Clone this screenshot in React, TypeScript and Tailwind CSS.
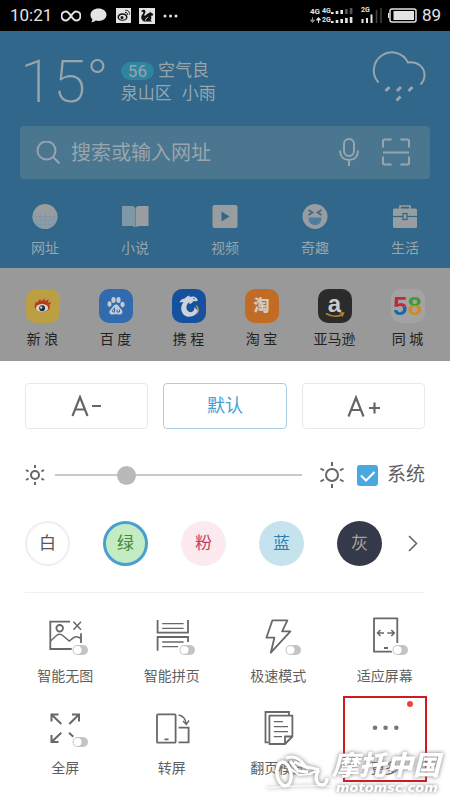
import { ReactNode, useState } from "react";

const navItems = [
  { label: "网址", icon: <GlobeIcon /> },
  { label: "小说", icon: <BookIcon /> },
  { label: "视频", icon: <VideoIcon /> },
  { label: "奇趣", icon: <LaughIcon /> },
  { label: "生活", icon: <BriefcaseIcon /> },
];

const sites = [
  { label: "新 浪", tile: "bg-[#bc9f42]", icon: <SinaLogo /> },
  { label: "百 度", tile: "bg-[#316bae]", icon: <BaiduLogo /> },
  { label: "携 程", tile: "bg-[#15519f]", icon: <CtripLogo /> },
  {
    label: "淘 宝",
    tile: "bg-[#c26b24]",
    icon: <span className="text-base font-black text-[#d2cbc4]">淘</span>,
  },
  { label: "亚马逊", tile: "bg-[#2b2b2b]", icon: <AmazonLogo /> },
  { label: "同 城", tile: "bg-[#a3a3a3]", icon: <TongchengLogo /> },
];

const themes = [
  { label: "白", style: "border-2 border-[#efefef] bg-white text-[#555]" },
  { label: "绿", style: "border-[3px] border-[#4a9fd2] bg-[#c4ecc3] text-[#48863c]" },
  { label: "粉", style: "bg-[#fdeaee] text-[#c33f6c]" },
  { label: "蓝", style: "bg-[#c5e3ec] text-[#2f7fb5]" },
  { label: "灰", style: "bg-[#343a4a] text-[#a8a298]" },
];

const features = [
  { label: "智能无图", toggle: true, icon: <NoImageIcon /> },
  { label: "智能拼页", toggle: true, icon: <JoinPagesIcon /> },
  { label: "极速模式", toggle: true, icon: <BoltIcon /> },
  { label: "适应屏幕", toggle: true, icon: <FitScreenIcon /> },
  { label: "全屏", toggle: true, icon: <FullscreenIcon /> },
  { label: "转屏", toggle: false, icon: <RotateIcon /> },
  { label: "翻页模式", toggle: false, icon: <PagesIcon /> },
  { label: "更多", toggle: false, icon: <MoreIcon />, highlight: true },
];

export default function App() {
  return (
    <div className="relative min-h-screen overflow-hidden bg-white font-['Roboto','Noto_Sans_CJK_SC',sans-serif]">
      <StatusBar />
      <header className="bg-[#30678a] text-[#98a5ad]">
        <Weather />
        <SearchBar />
        <nav className="grid grid-cols-5 pt-6 pb-[10px]">
          {navItems.map((item) => (
            <a key={item.label} href="#" className="flex flex-col items-center gap-2 text-sm leading-5">
              {item.icon}
              {item.label}
            </a>
          ))}
        </nav>
      </header>
      <section className="grid grid-cols-6 bg-[#999] px-[6px] pt-[21px] pb-3 text-[#222]">
        {sites.map((site) => (
          <a key={site.label} href="#" className="flex flex-col items-center gap-[6px] text-sm leading-5">
            <span className={`flex size-[34px] items-center justify-center rounded-[10px] ${site.tile}`}>
              {site.icon}
            </span>
            {site.label}
          </a>
        ))}
      </section>
      <Settings />
      <Watermark />
    </div>
  );
}

function StatusBar() {
  return (
    <div className="flex h-[31px] items-center bg-black pr-[9px] pl-[10px] text-[#e4e4e4]">
      <span className="text-[17px]">10:21</span>
      <svg width="20" height="12" viewBox="0 0 20 12" className="ml-[9px]" fill="none" stroke="currentColor" strokeWidth="2">
        <path d="M10 6C8 3 7 1.500 5 1.500a4.500 4.500 0 0 0 0 9C7 10.500 8 9 10 6s3-4.500 5-4.500a4.500 4.500 0 0 1 0 9C13 10.500 12 9 10 6Z" />
      </svg>
      <svg width="17" height="15" viewBox="0 0 17 15" className="ml-[9px]" fill="currentColor">
        <path d="M8.500 .5C13 .5 16.500 3.200 16.500 6.800S13 13 8.500 13c-1 0-2-.1-2.800-.4C4.600 13.600 3 14.200 1.200 14.200c.8-.8 1.200-1.700 1.200-2.900C1 10.200.5 8.600.5 6.800.5 3.200 4 .5 8.500.5Z" />
      </svg>
      <svg width="15" height="15" viewBox="0 0 15 15" className="ml-[9px]">
        <rect width="15" height="15" fill="#e4e4e4" />
        <ellipse cx="6.500" cy="9" rx="5" ry="3.800" fill="#111" />
        <ellipse cx="6.500" cy="9.300" rx="3.500" ry="2.500" fill="#e4e4e4" />
        <circle cx="6" cy="9.500" r="1.500" fill="#111" />
        <path d="M9 4.600c1.800-.4 2.800.7 2.400 2.200M9.300 2.400c2.700-.5 4.700 1.500 4 4.300" fill="none" stroke="#111" />
      </svg>
      <svg width="16" height="16" viewBox="0 0 16 16" className="ml-2">
        <rect width="16" height="16" fill="#e4e4e4" />
        <path
          d="M2.500 2.500C4 1.300 6.500 1.500 6.500 3.700 6.500 5.500 5 6 5.300 7.200c.3.800 1.200.6 2-.4C8.500 5.200 9.500 5 10.500 4.900l.5-1.700.8 1.500c1.500.2 2.400 1.200 2.500 2.200-.9.800-1.600.7-2.400.9.900 1.700.6 3-.3 4.200l1.400 1.500H5C2.800 12.600 2 10.500 2.300 8.600 2.600 6.800 4.500 5.500 4.300 4.300c-.2-.9-1.200-.6-1.800-.3Z"
          fill="#111"
        />
        <path d="M6.500 12.500c.2-1.800 1.200-2.700 2.700-3.200" stroke="#e4e4e4" fill="none" />
      </svg>
      <svg width="15" height="4" viewBox="0 0 15 4" className="ml-2" fill="currentColor">
        <circle cx="2" cy="2" r="1.500" />
        <circle cx="7.500" cy="2" r="1.500" />
        <circle cx="13" cy="2" r="1.500" />
      </svg>
      <div className="ml-auto flex items-center">
        <div className="grid grid-cols-[12px_9px_22px] items-center text-[7px] leading-[9px] font-bold">
          <span className="text-[8px]">4G</span>
          <span>4G</span>
          <SignalBars lit={3} />
          <svg width="11" height="6" viewBox="0 0 11 6">
            <path d="M2.500 0v3.500M.5 3h4L2.500 5.500Z" stroke="#888" fill="#888" />
            <path d="M8.500 6V2.500M6.500 3h4L8.500.5Z" stroke="#e4e4e4" fill="#e4e4e4" />
          </svg>
          <span>2G</span>
          <SignalBars lit={5} />
        </div>
        <div className="relative ml-[8px] h-[17px] w-[21px] text-[7px] leading-[7px] font-bold">
          2G
          <svg width="21" height="16" viewBox="0 0 21 16" className="absolute top-0 left-0">
            <path d="M1.500 16v-4M6 16v-5M10.500 16V7.500" stroke="#e4e4e4" strokeWidth="2" />
            <path d="M15.500 16V3M20 16V1" stroke="#444" strokeWidth="1.500" />
          </svg>
        </div>
        <svg width="29" height="15" viewBox="0 0 29 15" className="ml-[6px]">
          <rect x="2" y="1" width="26" height="13" rx="2" fill="none" stroke="#e4e4e4" strokeWidth="1.500" />
          <rect x="5.500" y="3" width="20.500" height="9" fill="#e4e4e4" />
          <path d="M.5 5v5" stroke="#e4e4e4" />
        </svg>
        <span className="ml-[5px] text-[17px]">89</span>
      </div>
    </div>
  );
}

function SignalBars({ lit }: { lit: number }) {
  return (
    <svg width="22" height="6" viewBox="0 0 22 6">
      {[2, 3, 4, 5, 6].map((h, i) => (
        <rect key={h} x={i * 4.7} y={6 - h} width="2.600" height={h} fill={i < lit ? "#e4e4e4" : "#555"} />
      ))}
    </svg>
  );
}

function Weather() {
  return (
    <div className="flex items-start px-5 pt-5 pb-[13px]">
      <span className="text-[60px] leading-[62px] font-extralight">15°</span>
      <div className="mt-2 ml-3 text-[17px] leading-[23px]">
        <p className="flex items-center gap-1">
          <span className="h-[18px] rounded-full bg-[#2f84a0] px-[7px] leading-[18px]">56</span>
          空气良
        </p>
        <p className="flex gap-[10px]">
          <span>泉山区</span>
          <span>小雨</span>
        </p>
      </div>
      <svg width="54" height="54" viewBox="0 0 54 54" className="mr-1 ml-auto" fill="none" stroke="currentColor" strokeWidth="2">
        <path d="M6.500 31.500A18 18 0 1 1 36 11.500c9.500-1.500 16.500 4.500 16.500 12.500 0 3.500-1.500 7-4 9.500" />
        <path d="m17.500 36-4 4M29 36l-4 4M40.500 36l-4 4M28.500 45.500l-4 4" strokeWidth="3" />
      </svg>
    </div>
  );
}

function SearchBar() {
  return (
    <form className="mx-5 flex h-[53px] items-center rounded-sm bg-[#4a7690] pr-5 pl-4">
      <svg width="24" height="24" viewBox="0 0 24 24" fill="none" stroke="currentColor" strokeWidth="2">
        <circle cx="10.500" cy="9.500" r="9" />
        <path d="m17 16 6.500 6.500" />
      </svg>
      <input
        type="search"
        aria-label="搜索或输入网址"
        placeholder="搜索或输入网址"
        className="ml-[11px] min-w-0 flex-1 bg-transparent text-xl outline-none placeholder:text-[#98a5ad]"
      />
      <button type="button" aria-label="语音">
        <svg width="20" height="30" viewBox="0 0 20 30" fill="none" stroke="currentColor" strokeWidth="2">
          <rect x="5" y="1" width="10" height="17" rx="5" />
          <path d="M1 12.500c0 6 3.500 9.500 9 9.500s9-3.500 9-9.500M10 22v6" />
        </svg>
      </button>
      <button type="button" aria-label="扫码" className="ml-[23px]">
        <svg width="28" height="30" viewBox="0 0 28 30" fill="none" stroke="currentColor" strokeWidth="2">
          <path d="M1 9.500V3q0-1.500 1.500-1.500h7M18.500 1.500h7Q27 1.500 27 3v6.500M27 18.500V25q0 1.500-1.500 1.500h-7M9.500 26.500h-7Q1 26.500 1 25v-6.500M1 14.500h26" />
        </svg>
      </button>
    </form>
  );
}

function Settings() {
  const [brightness, setBrightness] = useState(27);

  return (
    <section className="text-[#5f5f5f]">
      <div className="grid grid-cols-3 gap-[15px] px-[25px] pt-[22px]">
        <button className="flex h-[46px] items-center justify-center rounded border border-[#e6eaec]" aria-label="A-">
          <svg width="32" height="22" viewBox="0 0 32 22" fill="none" stroke="#666" strokeWidth="2.200">
            <path d="M1.500 21 9 2l7.500 19M4.500 14.500h9M21 11h9" />
          </svg>
        </button>
        <button className="h-[46px] rounded border border-[#a9cde2] text-lg text-[#459fd5]">默认</button>
        <button className="flex h-[46px] items-center justify-center rounded border border-[#e6eaec]" aria-label="A+">
          <svg width="34" height="22" viewBox="0 0 34 22" fill="none" stroke="#666" strokeWidth="2.200">
            <path d="M2.500 21.500 10 2.500l7.500 19M5.500 15h9M23 13h11M28.500 7.500v11" />
          </svg>
        </button>
      </div>

      <div className="mt-8 flex h-7 items-center px-[25px]">
        <svg width="20" height="20" viewBox="0 0 20 20" fill="none" stroke="#666" strokeWidth="2">
          <circle cx="10" cy="10" r="4" />
          <path d="M10 0v3M10 17v3M1 5l2.600 1.500M16.400 13.500 19 15M1 15l2.600-1.500M16.400 6.500 19 5" />
        </svg>
        <input
          type="range"
          aria-label="亮度"
          value={brightness}
          onChange={(e) => setBrightness(Number(e.target.value))}
          className="mr-[17px] ml-[10px] h-[2px] min-w-0 flex-1 appearance-none bg-[#c8c8c8] [&::-webkit-slider-thumb]:size-[19px] [&::-webkit-slider-thumb]:appearance-none [&::-webkit-slider-thumb]:rounded-full [&::-webkit-slider-thumb]:bg-[#b9b9b9]"
        />
        <svg width="26" height="26" viewBox="0 0 26 26" fill="none" stroke="#666" strokeWidth="2">
          <circle cx="13" cy="13" r="6" />
          <path d="M13 0v4M13 22v4M1.500 6.500l3.500 2M21 17.500l3.500 2M1.500 19.500l3.500-2M21 8.500l3.500-2" />
        </svg>
        <label className="ml-3 flex items-center gap-[9px] text-[19px]">
          <span className="relative size-[21px]">
            <input type="checkbox" defaultChecked className="block size-[21px] appearance-none rounded-[3px] bg-[#4aa8e0]" />
            <svg width="21" height="21" viewBox="0 0 21 21" className="pointer-events-none absolute inset-0" fill="none" stroke="#fff" strokeWidth="2">
              <path d="m4 10.500 5 5L17.500 7" />
            </svg>
          </span>
          系统
        </label>
      </div>

      <div className="mt-8 flex items-center gap-[26px] pr-8 pl-[25px]">
        <div className="flex flex-1 justify-between">
          {themes.map((theme) => (
            <button key={theme.label} className={`size-[45px] rounded-full text-[17px] ${theme.style}`}>
              {theme.label}
            </button>
          ))}
        </div>
        <button aria-label="更多颜色">
          <svg width="10" height="17" viewBox="0 0 10 17" fill="none" stroke="#666" strokeWidth="1.600">
            <path d="m1 1 7.500 7.500L1 16" />
          </svg>
        </button>
      </div>

      <hr className="mx-[25px] mt-[26px] border-[#f0f0f0]" />

      <div className="grid grid-cols-4 px-3 pt-[11px]">
        {features.map((feature) => (
          <button key={feature.label} className="relative flex h-[92px] flex-col items-center pt-3 text-sm leading-5">
            <svg width="48" height="40" viewBox="0 0 48 40" fill="none" stroke="#686868" strokeWidth="1.800">
              {feature.icon}
              {feature.toggle && <Toggle />}
            </svg>
            <span className="mt-[10px]">{feature.label}</span>
            {feature.highlight && (
              <>
                <span className="absolute inset-x-[11px] top-0 h-[86px] border-[2px] border-[#cf1a20]" />
                <span className="absolute top-[5px] right-[25px] size-[6px] rounded-full bg-[#f04040]" />
              </>
            )}
          </button>
        ))}
      </div>
    </section>
  );
}

function Toggle() {
  return (
    <g stroke="none">
      <rect x="30.500" y="28.500" width="17" height="11" rx="5.500" fill="#fff" />
      <rect x="31.500" y="29" width="15.500" height="10" rx="5" fill="#c4c4c4" />
      <circle cx="36.500" cy="34" r="4" fill="#fff" />
    </g>
  );
}

function NoImageIcon() {
  return (
    <>
      <path d="M29 5.700H9.300V33H31M40 17.300V27" />
      <circle cx="18.700" cy="12.300" r="3.300" />
      <path d="m9.500 25 6-5.500q3.500-2.500 6.500.3l6.300 5.200 4-3.200q4-2.500 7.700 1.200M32.500 5.700l7.500 8M40 5.700l-7.500 8" strokeWidth="1.500" />
    </>
  );
}

function JoinPagesIcon() {
  return (
    <>
      <path d="M9.600 4v12.700H40V4M9.600 34.700V21H40v5" />
      <path d="M14.200 7.700h21.400M14.200 12.300h21.400M14.200 26h21.400M14.200 30.700h16" strokeWidth="1.300" />
    </>
  );
}

function BoltIcon() {
  return (
    <path d="M18.400 4.300h15l-5.300 11h8.300L16.800 36.700l3.600-15h-8Z" strokeLinejoin="round" />
  );
}

function FitScreenIcon() {
  return (
    <>
      <path d="M36.300 27V2.300H13v33.400h18M23 32h4" strokeLinejoin="round" />
      <path d="M23 17h-6.500m3-3-3 3 3 3M26.300 17h7m-3-3 3 3-3 3" strokeWidth="1.500" />
    </>
  );
}

function FullscreenIcon() {
  return (
    <path
      d="M20.300 16 10.500 6.500M17.500 6.500h-7v7M28.300 16l9.700-9.500M31 6.500h7v7M20.300 24.700 10.500 34M17.500 34h-7v-7M28 24.700l4.300 4"
      strokeWidth="2"
    />
  );
}

function RotateIcon() {
  return (
    <>
      <rect x="9" y="6.300" width="18.600" height="28.400" rx="1" />
      <path d="M16.500 31.300h4M30.600 19.700h10v14.600h-10" />
      <path d="M30.600 7c4.500.7 7 4 7.600 9M35 13l3.300 3.500 2.700-4" strokeWidth="1.400" />
    </>
  );
}

function PagesIcon() {
  return (
    <>
      <path d="M35 7V4H11.500v30.300h3" />
      <path d="M38.400 28.500V7.700h-23V36H31l7.400-7.500H31V36" strokeLinejoin="round" />
      <path d="M19.800 13.700H29M19.800 18.700H34M19.800 23.700H34M19.800 28.700H28" strokeWidth="1.300" />
    </>
  );
}

function MoreIcon() {
  return (
    <g fill="#777" stroke="none">
      <circle cx="14" cy="19.700" r="2.300" />
      <circle cx="24.600" cy="19.700" r="2.300" />
      <circle cx="35.300" cy="19.700" r="2.300" />
    </g>
  );
}

function NavIcon({ children }: { children: ReactNode }) {
  return (
    <svg width="28" height="27" viewBox="0 0 28 27" fill="#999da0">
      {children}
    </svg>
  );
}

function GlobeIcon() {
  return (
    <NavIcon>
      <circle cx="14" cy="13.500" r="12.500" />
      <path d="M1.500 13.500h25a12.500 12.500 0 0 1-25 0Z" fill="#8c9da8" />
      <path d="M1.500 13.500h25M2.500 17.500h23M5 21.500h18M14 9v17M9.500 9c-1 6 0 12 1.500 16M18.500 9c1 6 0 12-1.500 16M5 9c-1 5 0 10 3 14M23 9c1 5 0 10-3 14" fill="none" stroke="#8296a3" strokeWidth=".6" />
    </NavIcon>
  );
}

function BookIcon() {
  return (
    <NavIcon>
      <path d="M1 3h10q2 0 3 1.500v20Q13 23 11 23H1Z" fill="#7f98a8" />
      <path d="M14.500 24.500v-19Q15 3 18 3h9.500v20H18q-2.500 0-3.500 1.500Z" />
    </NavIcon>
  );
}

function VideoIcon() {
  return (
    <NavIcon>
      <rect x="1.500" y="2" width="25" height="23" rx="2" />
      <path d="m10.500 8.500 8 5-8 5Z" fill="#30678a" />
    </NavIcon>
  );
}

function LaughIcon() {
  return (
    <NavIcon>
      <circle cx="14" cy="13.500" r="12.500" />
      <path d="m7.500 7 4 2.500-4 2.500M20.500 7l-4 2.500 4 2.500" fill="none" stroke="#30678a" strokeWidth="1.500" />
      <path d="M7.500 14.500h13c0 5-2.500 7.500-6.500 7.500s-6.500-2.500-6.500-7.500Z" fill="#4a7f9f" />
    </NavIcon>
  );
}

function BriefcaseIcon() {
  return (
    <NavIcon>
      <path d="M9 6V3h10v3" fill="none" stroke="#999da0" strokeWidth="1.700" />
      <rect x="2" y="5.500" width="24" height="19.500" rx="1.500" />
      <path d="M2 13.500h24" stroke="#30678a" strokeWidth="1.200" />
      <rect x="12" y="10.500" width="4" height="6" stroke="#30678a" strokeWidth="1.200" />
    </NavIcon>
  );
}

function SinaLogo() {
  return (
    <svg width="20" height="18" viewBox="0 0 22 20">
      <path d="M2 12C1 8 3 6 4 5c0 1 .3 1.500.8 2C5 4.500 7 3.500 8 2c.2 1.200.3 2 .8 2.800C10 4 11.500 3 12.500 1c.4 1.500.3 2.500.2 3.500C14.500 4 16 3.500 17 2.500c.2 1.500-.3 2.500-1 3.500 1.500.2 3 0 4-.5-.3 1.500-1.200 2.500-2 3 1 1.500 1 4-1 6-3.500 3-12 3-15-2.500Z" fill="#b63b1c" />
      <ellipse cx="10" cy="12.300" rx="6.800" ry="4.400" fill="#d8d4cc" />
      <circle cx="10" cy="12.500" r="3.200" fill="#17303d" />
      <circle cx="9" cy="11.700" r="1.300" fill="#d8d4cc" />
    </svg>
  );
}

function BaiduLogo() {
  return (
    <svg width="18" height="20" viewBox="0 0 18 20" fill="#c3cad2">
      <ellipse cx="2.500" cy="8" rx="2" ry="2.800" />
      <ellipse cx="6.500" cy="4" rx="2.100" ry="3" />
      <ellipse cx="11.500" cy="4" rx="2.100" ry="3" />
      <ellipse cx="15.500" cy="8.500" rx="2" ry="2.800" />
      <path d="M9 8.500c2.500 0 3 2.500 5 4.500 3 3 1 6-2 5.500-2-.3-4-.3-6 0-3.500.5-5-3-2-5.500 2-2 2.500-4.500 5-4.500Z" />
      <path d="M7.500 11.500V16H6q-1.500-1.500 0-2.500h1.500M10 13.500V16h2.500v-2.500" fill="none" stroke="#316bae" />
    </svg>
  );
}

function CtripLogo() {
  return (
    <svg width="24" height="26" viewBox="0 0 24 26">
      <path
        d="M2.500 9.500C3 7.500 5 6 8 5.300 9.500 3.500 11 2.500 13 3l-.7 1.300C15 3 18 3 19.500 5c1 1 1.200 2.200 1 3-1.500.3-3 .2-4.500.3-.5 1.700-2 2.700-3.800 2.700l.3-2C9.500 11 8.500 15 10.500 17.500c2 2.500 5 2 6.500-.5l.5-3 2 2.500 2.300.5C19.500 22 15 24.500 10 23.500 4.500 22 2 14.500 6.500 9Z"
        fill="#cbd2da"
      />
      <path d="M18.500 11.500c4.500 2.500 4.500 8 .5 11 1.300-2 1.800-3 1.500-5.500Z" fill="#c58b45" />
      <circle cx="17" cy="5.800" r=".7" fill="#15519f" />
    </svg>
  );
}

function AmazonLogo() {
  return (
    <span className="flex flex-col items-center font-['Liberation_Sans',sans-serif] text-2xl leading-[17px] font-bold text-[#cacaca]">
      a
      <svg width="20" height="6" viewBox="0 0 20 6" fill="none" stroke="#b88428" strokeWidth="1.500">
        <path d="M1 1.500q8.500 5 16.500 1M14.500 1h4L17 4.500" />
      </svg>
    </span>
  );
}

function TongchengLogo() {
  return (
    <span className="flex font-['Liberation_Sans',sans-serif] text-[26px] leading-[26px] font-bold text-transparent">
      <span className="bg-linear-to-b from-[#c2283a] from-50% to-[#1668a8] to-55% bg-clip-text">5</span>
      <span className="bg-linear-to-b from-[#3e9a34] from-45% to-[#d08a1e] to-50% bg-clip-text">8</span>
    </span>
  );
}

function Watermark() {
  return (
    <div className="pointer-events-none absolute top-[752px] right-[10px] flex items-start text-white italic drop-shadow-[0_0_2px_#777]">
      <svg width="66" height="38" viewBox="0 0 66 38" fill="none" stroke="#fff">
        <ellipse cx="18" cy="22" rx="7" ry="12" strokeWidth="3.500" transform="rotate(-10 18 22)" />
        <path d="M20 6c8-3 15 1 20 9l-12-5M24 9l8 10 10 1M38 14c6 2 10 2 15 4" strokeWidth="3" />
        <path d="m25 17 8 6 11-1 6-3" strokeWidth="2" />
        <path d="M53 18c-5 6-3 15 3 15 3 0 5-3 5-7" strokeWidth="3.500" />
        <path d="M1 36q25-3 63-2" strokeWidth="1" />
      </svg>
      <div>
        <p className="text-[27px] leading-[29px] font-black">摩托中国</p>
        <p className="pl-1 font-['DejaVu_Sans',sans-serif] text-[13px] leading-[14px] font-bold">motomsc.com</p>
      </div>
    </div>
  );
}
